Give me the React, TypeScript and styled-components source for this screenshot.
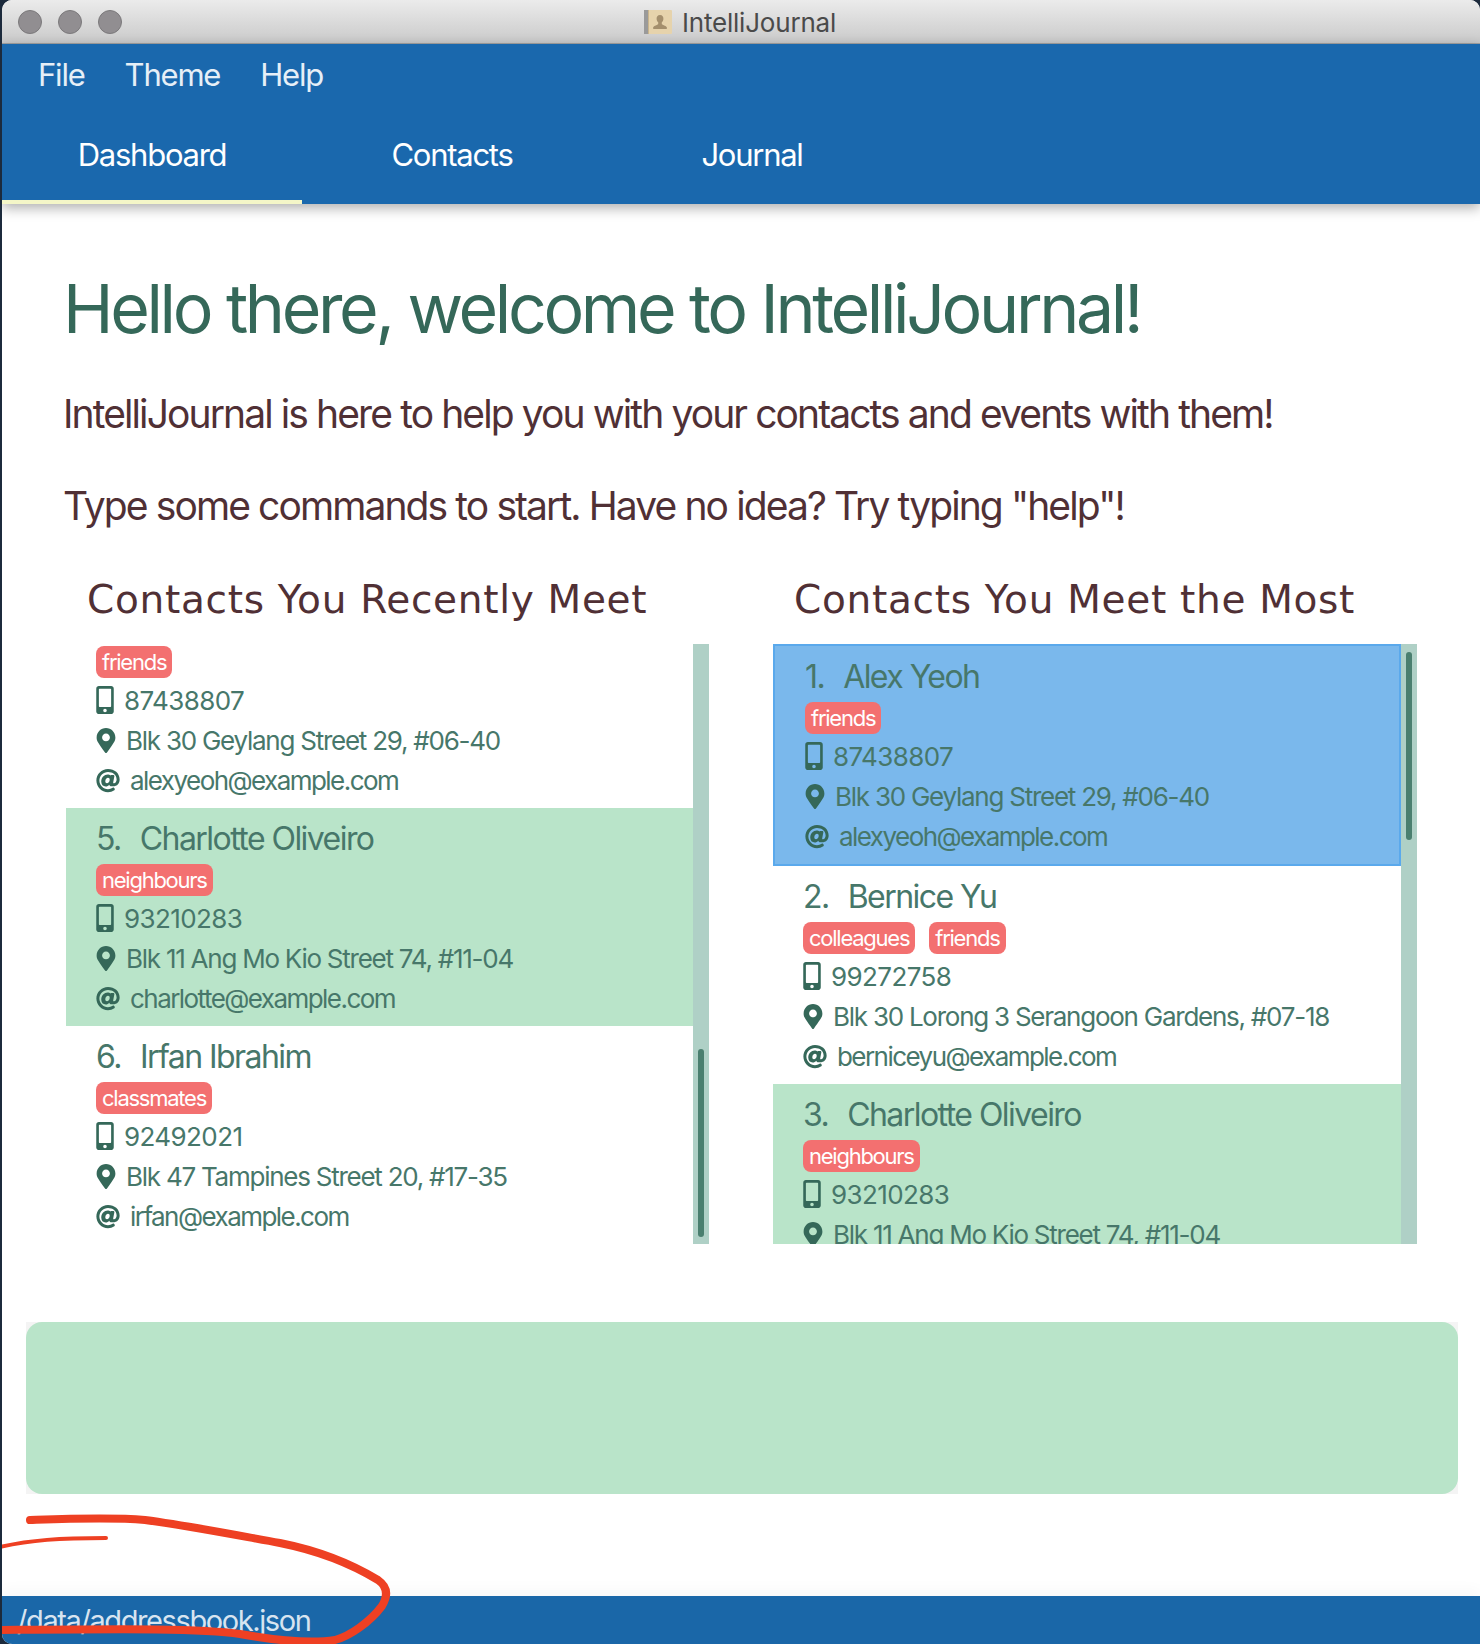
import React from "react";
import styled, { createGlobalStyle } from "styled-components";
import { FaAt, FaMapMarkerAlt, FaMobileAlt } from "react-icons/fa";

const Global = createGlobalStyle`
  html, body { margin: 0; padding: 0; background: #1c2a3c; }
  #root { width: 1480px; height: 1644px; }
`;

const Window = styled.div`
  position: relative;
  margin-left: 2px;
  width: 1478px;
  height: 1644px;
  background: #fff;
  border-radius: 10px 10px 0 10px;
  overflow: hidden;
  display: flex;
  flex-direction: column;
  font-family: Inter, "Liberation Sans", sans-serif;
`;

const TitleBar = styled.div`
  height: 44px;
  flex: none;
  display: flex;
  align-items: center;
  position: relative;
  background: linear-gradient(#ebebeb, #cacaca);
  border-bottom: 1px solid #a3a3a3;
  box-sizing: border-box;
  justify-content: center;
  gap: 10px;
  padding-right: 2px;
`;

const Lights = styled.div`
  position: absolute;
  left: 16px;
  top: 10px;
  display: flex;
  gap: 16px;
`;

const Light = styled.span`
  width: 24px;
  height: 24px;
  border-radius: 50%;
  box-sizing: border-box;
  background: #918e91;
  border: 1px solid #7b797b;
`;

const TitleText = styled.span`
  font-size: 26px;
  color: #4a4a4a;
  letter-spacing: -0.2px;
  padding-top: 1px;
`;

const Header = styled.div`
  background: #1a68ad;
  height: 160px;
  flex: none;
  position: relative;
  z-index: 1;
  box-shadow: 0 4px 12px rgba(0, 0, 0, 0.32);
  display: flex;
  flex-direction: column;
`;

const MenuBar = styled.nav`
  height: 61px;
  display: flex;
  align-items: center;
  padding-left: 36px;
  gap: 40px;
  font-size: 31px;
  letter-spacing: -1.2px;
  color: #e6eff7;
`;

const Tabs = styled.div`
  height: 99px;
  display: flex;
`;

const Tab = styled.div<{ $active?: boolean }>`
  width: 300px;
  box-sizing: border-box;
  display: flex;
  align-items: center;
  justify-content: center;
  padding-top: 4px;
  font-size: 31px;
  letter-spacing: -1.25px;
  color: #fff;
  border-bottom: 4px solid ${(p) => (p.$active ? "#f4f6c8" : "transparent")};
`;

const Main = styled.main`
  flex: 1;
  display: flex;
  flex-direction: column;
`;

const Heading = styled.h1`
  margin: 64px 0 0 61px;
  font-size: 68px;
  line-height: 80px;
  font-weight: 400;
  letter-spacing: -3.35px;
  color: #356859;
`;

const Lead = styled.p`
  margin: 41px 0 0 61px;
  font-size: 39px;
  line-height: 50px;
  letter-spacing: -1.9px;
  color: #503035;
`;

const LeadNext = styled(Lead)`
  margin-top: 42px;
`;

const Columns = styled.div`
  display: flex;
  margin-top: 44px;
  margin-left: 64px;
`;

const Column = styled.section`
  width: 643px;
  & + & { margin-left: 64px; width: 644px; }
`;

const ColumnTitle = styled.h2`
  margin: 0 0 19px 21px;
  font-family: "DejaVu Sans", Verdana, sans-serif;
  font-weight: 400;
  font-size: 39px;
  line-height: 50px;
  letter-spacing: 0.7px;
  color: #503035;
`;

const ListFrame = styled.div`
  height: 600px;
  display: flex;
  overflow: hidden;
`;

const ListBody = styled.div`
  flex: 1;
  min-width: 0;
  overflow: hidden;
`;

const Track = styled.div<{ $pad: number; $align: string }>`
  width: 16px;
  flex: none;
  background: #afd0c6;
  box-sizing: border-box;
  padding: ${(p) => p.$pad}px 5px;
  display: flex;
  flex-direction: column;
  justify-content: ${(p) => p.$align};
`;

const Thumb = styled.div`
  height: 188px;
  background: #4a7f6f;
  border-radius: 4px;
`;

const Row = styled.article<{ $tone?: "green" | "blue"; $cut?: boolean }>`
  box-sizing: border-box;
  padding: ${(p) => (p.$cut ? "2px" : "0")} 0 7px 30px;
  background: ${(p) => (p.$tone === "green" ? "#b9e4c9" : p.$tone === "blue" ? "#7ab8ec" : "transparent")};
  ${(p) => (p.$tone === "blue" ? "border: 2px solid #5aa9ec;" : "")}
`;

const Name = styled.div`
  height: 56px;
  display: flex;
  align-items: center;
  padding-top: 4px;
  box-sizing: border-box;
  font-size: 32px;
  letter-spacing: -1.55px;
  color: #47776a;
`;

const Index = styled.span`
  margin-right: 19px;
`;

const Tags = styled.div`
  display: flex;
  gap: 14px;
  margin-bottom: 3px;
`;

const Tag = styled.span`
  height: 32px;
  box-sizing: border-box;
  padding: 0 6px;
  display: flex;
  align-items: center;
  border-radius: 8px;
  background: #f37070;
  color: #fff;
  font-size: 22px;
  letter-spacing: -1.25px;
`;

const Detail = styled.div<{ $track: number }>`
  height: 40px;
  padding-bottom: 2px;
  box-sizing: border-box;
  display: flex;
  align-items: center;
  gap: 10px;
  font-size: 26px;
  letter-spacing: ${(p) => p.$track}px;
  color: #47776a;
  white-space: nowrap;
`;

const PhoneIcon = styled(FaMobileAlt)`
  width: 18px;
  height: 28px;
  flex: none;
  color: #356859;
`;

const PinIcon = styled(FaMapMarkerAlt)`
  width: 20px;
  height: 25px;
  flex: none;
  color: #356859;
`;

const AtIcon = styled(FaAt)`
  width: 24px;
  height: 25px;
  flex: none;
  color: #356859;
`;

const CommandWrap = styled.div`
  margin: 78px 22px 0 24px;
  background: #f4f4f4;
`;

const CommandBox = styled.div`
  height: 172px;
  background: #b9e4c9;
  border-radius: 16px;
`;

const StatusBar = styled.footer`
  height: 48px;
  flex: none;
  background: #1a67a8;
  box-shadow: 0 -6px 14px rgba(0, 0, 0, 0.03);
  display: flex;
  align-items: center;
  padding-left: 15px;
  box-sizing: border-box;
  font-size: 29px;
  letter-spacing: -1.4px;
  color: #d7e4f0;
`;

const Scribble = styled.svg`
  position: absolute;
  left: -2px;
  top: 0;
  pointer-events: none;
`;

const people = {
  alex: { name: "Alex Yeoh", tags: ["friends"], phone: "87438807", address: "Blk 30 Geylang Street 29, #06-40", email: "alexyeoh@example.com" },
  bernice: { name: "Bernice Yu", tags: ["colleagues", "friends"], phone: "99272758", address: "Blk 30 Lorong 3 Serangoon Gardens, #07-18", email: "berniceyu@example.com" },
  charlotte: { name: "Charlotte Oliveiro", tags: ["neighbours"], phone: "93210283", address: "Blk 11 Ang Mo Kio Street 74, #11-04", email: "charlotte@example.com" },
  irfan: { name: "Irfan Ibrahim", tags: ["classmates"], phone: "92492021", address: "Blk 47 Tampines Street 20, #17-35", email: "irfan@example.com" },
};

type Person = typeof people.alex;

function Card({ p, n, tone }: { p: Person; n?: number; tone?: "green" | "blue" }) {
  return (
    <Row $tone={tone} $cut={n === undefined}>
      {n !== undefined && (
        <Name>
          <Index>{n}.</Index>
          {p.name}
        </Name>
      )}
      <Tags>
        {p.tags.map((t) => (
          <Tag key={t}>{t}</Tag>
        ))}
      </Tags>
      <Detail $track={-0.6}><PhoneIcon />{p.phone}</Detail>
      <Detail $track={-1.25}><PinIcon />{p.address}</Detail>
      <Detail $track={-1.55}><AtIcon />{p.email}</Detail>
    </Row>
  );
}

export default function App() {
  return (
    <>
      <Global />
      <Window>
        <TitleBar>
          <Lights><Light /><Light /><Light /></Lights>
          <svg width="28" height="26" viewBox="0 0 28 26">
            <rect x="0" y="1" width="28" height="24" rx="1" fill="#e6d3ac" />
            <rect x="0" y="1" width="4" height="24" fill="#9a9a9a" />
            <rect x="4" y="1" width="1" height="24" fill="#c8b48d" />
            <path d="M16 6c2.4 0 3.6 1.8 3.4 4-.1 1.4-.8 2.6-1.6 3.3v1.6c0 .7 4 1.6 5 3.2v1.9H9.2v-1.9c1-1.6 5-2.5 5-3.2v-1.6c-.8-.7-1.5-1.9-1.6-3.3C12.4 7.8 13.6 6 16 6z" fill="#a48f6d" />
          </svg>
          <TitleText>IntelliJournal</TitleText>
        </TitleBar>
        <Header>
          <MenuBar><span>File</span><span>Theme</span><span>Help</span></MenuBar>
          <Tabs>
            <Tab $active>Dashboard</Tab>
            <Tab>Contacts</Tab>
            <Tab>Journal</Tab>
          </Tabs>
        </Header>
        <Main>
          <Heading>Hello there, welcome to IntelliJournal!</Heading>
          <Lead>IntelliJournal is here to help you with your contacts and events with them!</Lead>
          <LeadNext>Type some commands to start. Have no idea? Try typing "help"!</LeadNext>
          <Columns>
            <Column>
              <ColumnTitle>Contacts You Recently Meet</ColumnTitle>
              <ListFrame>
                <ListBody>
                  <Card p={people.alex} />
                  <Card p={people.charlotte} n={5} tone="green" />
                  <Card p={people.irfan} n={6} />
                </ListBody>
                <Track $pad={7} $align="flex-end"><Thumb /></Track>
              </ListFrame>
            </Column>
            <Column>
              <ColumnTitle>Contacts You Meet the Most</ColumnTitle>
              <ListFrame>
                <ListBody>
                  <Card p={people.alex} n={1} tone="blue" />
                  <Card p={people.bernice} n={2} />
                  <Card p={people.charlotte} n={3} tone="green" />
                </ListBody>
                <Track $pad={8} $align="flex-start"><Thumb /></Track>
              </ListFrame>
            </Column>
          </Columns>
          <CommandWrap><CommandBox /></CommandWrap>
        </Main>
        <StatusBar>/data/addressbook.json</StatusBar>
        <Scribble width="1480" height="1644" viewBox="0 0 1480 1644" fill="none" stroke="#ee4023" strokeLinecap="round" strokeLinejoin="round">
          <path strokeWidth="8" d="M30 1520C60 1519 110 1517 145 1520C190 1526 230 1534 280 1543C320 1551 350 1563 378 1580C388 1587 388 1596 382 1606C370 1622 350 1636 335 1640C310 1644 280 1641 240 1634C200 1628 120 1629 0 1630" />
          <path strokeWidth="4" d="M0 1547C30 1540 60 1538 106 1538" />
        </Scribble>
      </Window>
    </>
  );
}
